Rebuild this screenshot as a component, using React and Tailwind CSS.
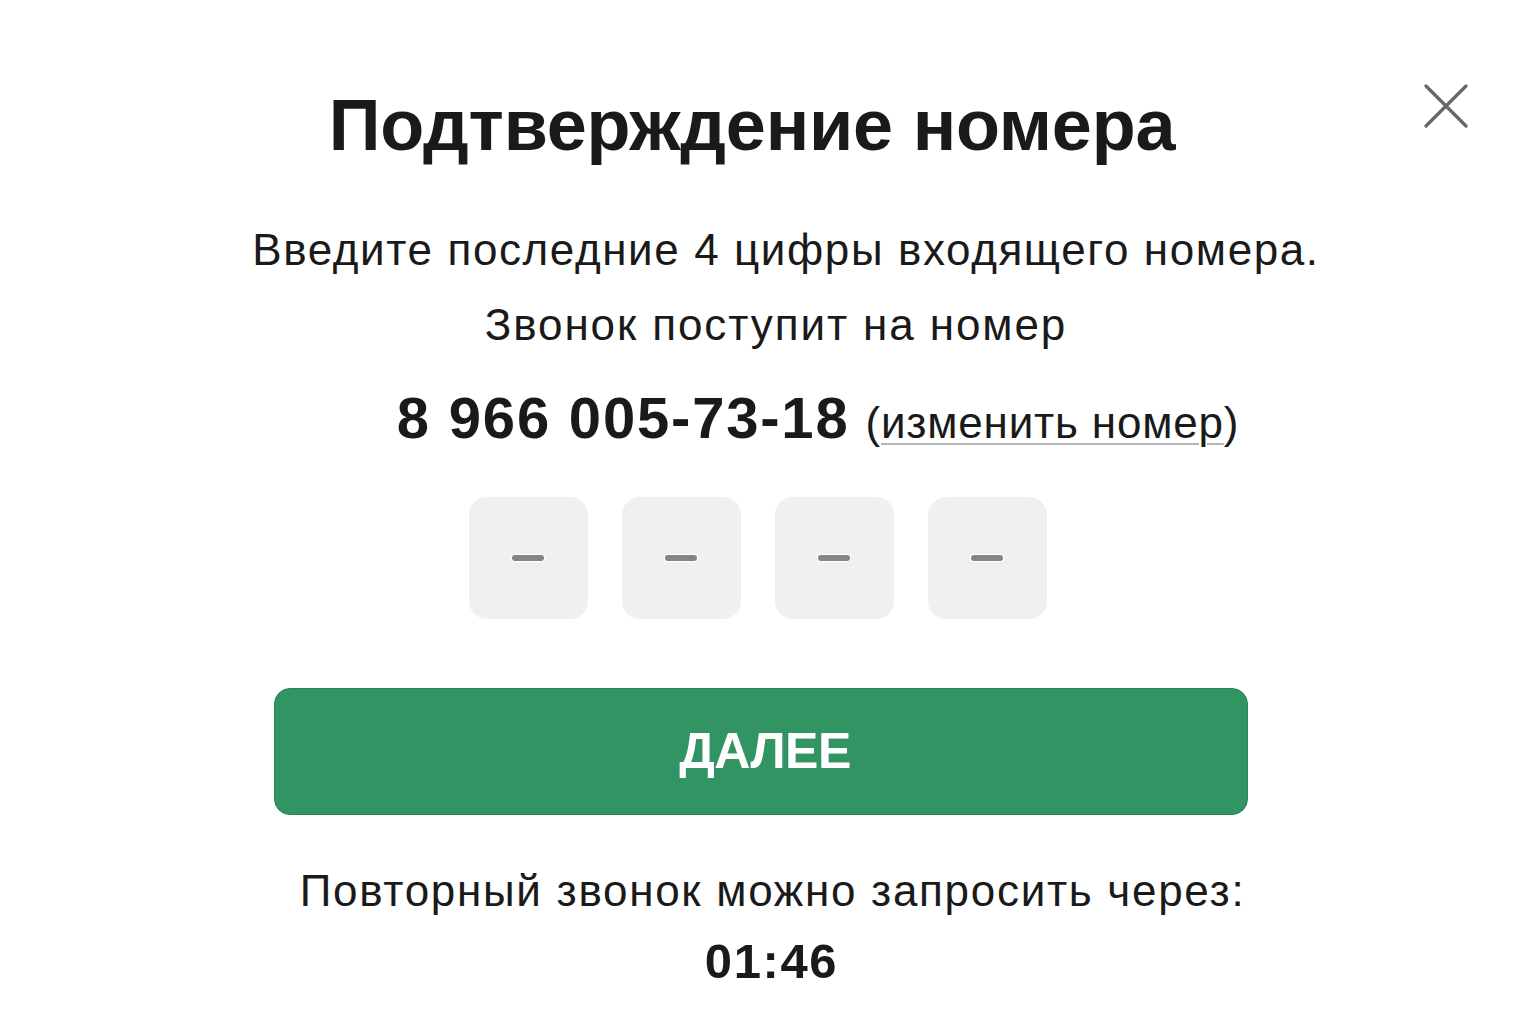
export default function App() {
  const digits = [0, 1, 2, 3];

  return (
    <div className="relative w-full h-[1024px] bg-white text-[#1a1a1a]" style={{ fontFamily: "'Liberation Sans', Arial, sans-serif" }}>
      <button type="button" className="absolute top-[84px] right-[68px] w-[44px] h-[44px] text-[#666]">
        <svg viewBox="0 0 44 44" className="w-full h-full" fill="none" stroke="currentColor" strokeWidth="3.2" strokeLinecap="round">
          <path d="M2 2l40 40M42 2L2 42" />
        </svg>
      </button>

      <div className="flex flex-col items-center pt-[85px]">
        <h1 className="text-[72px] leading-[80px] font-bold tracking-[-0.2px] pr-[32px]">Подтверждение номера</h1>

        <p className="mt-[57px] text-[44px] leading-[56px] tracking-[1.6px] pl-[36px]">Введите последние 4 цифры входящего номера.</p>
        <p className="mt-[19px] text-[44px] leading-[56px] tracking-[1.9px] pl-[16px]">Звонок поступит на номер</p>

        <div className="mt-[32px] flex items-baseline gap-[16px] pl-[100px]">
          <span className="text-[58px] leading-[66px] font-bold tracking-[1.8px]">8 966 005-73-18</span>
          <span className="text-[44px] leading-[56px] tracking-[0.8px]">
            (<span className="underline decoration-[#b5b5b5] decoration-2 underline-offset-[5px]">изменить номер</span>)
          </span>
        </div>

        <div className="mt-[46px] flex gap-[34px] pr-[21px]">
          {digits.map((d) => (
            <div key={d} className="w-[119px] h-[122px] rounded-[18px] bg-[#f0f0f0] flex items-center justify-center">
              <div className="w-[32px] h-[6px] rounded-full bg-[#858585] ring-1 ring-white" />
            </div>
          ))}
        </div>

        <button type="button" className="mt-[69px] mr-[14px] w-[974px] h-[127px] rounded-[16px] bg-[#319462] border border-[#2a8553] text-white text-[50px] font-bold tracking-[-0.5px] pl-[8px]">
          ДАЛЕЕ
        </button>

        <p className="mt-[48px] text-[44px] leading-[56px] tracking-[1.7px] pl-[9px]">Повторный звонок можно запросить через:</p>
        <p className="mt-[14px] text-[49px] leading-[56px] font-bold tracking-[1.6px] pl-[7px]">01:46</p>
      </div>
    </div>
  );
}
